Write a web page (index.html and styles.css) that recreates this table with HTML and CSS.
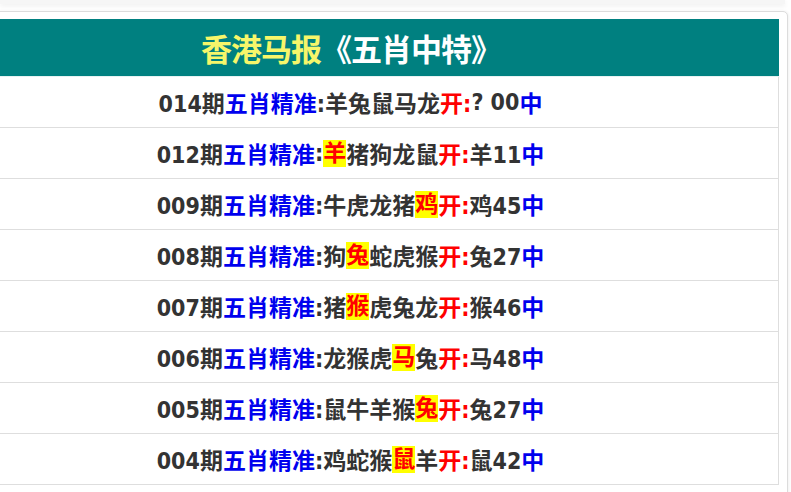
FILE: index.html
```html
<!DOCTYPE html>
<html lang="zh-CN">
<head>
<meta charset="utf-8">
<title>香港马报《五肖中特》</title>
<link rel="stylesheet" href="styles.css">
</head>
<body>
<div class="top"></div>
<div class="card">
  <div class="head"><span class="yl">香港马报</span><span class="wt">《五肖中特》</span></div>
  <div class="list">
    <div class="row">014期<b class="bl">五肖精准</b>:羊兔鼠马龙<b class="rd">开:</b>? 00<b class="bl">中</b></div>
    <div class="row">012期<b class="bl">五肖精准</b>:<span class="hl">羊</span>猪狗龙鼠<b class="rd">开:</b>羊11<b class="bl">中</b></div>
    <div class="row">009期<b class="bl">五肖精准</b>:牛虎龙猪<span class="hl">鸡</span><b class="rd">开:</b>鸡45<b class="bl">中</b></div>
    <div class="row">008期<b class="bl">五肖精准</b>:狗<span class="hl">兔</span>蛇虎猴<b class="rd">开:</b>兔27<b class="bl">中</b></div>
    <div class="row">007期<b class="bl">五肖精准</b>:猪<span class="hl">猴</span>虎兔龙<b class="rd">开:</b>猴46<b class="bl">中</b></div>
    <div class="row">006期<b class="bl">五肖精准</b>:龙猴虎<span class="hl">马</span>兔<b class="rd">开:</b>马48<b class="bl">中</b></div>
    <div class="row">005期<b class="bl">五肖精准</b>:鼠牛羊猴<span class="hl">兔</span><b class="rd">开:</b>兔27<b class="bl">中</b></div>
    <div class="row">004期<b class="bl">五肖精准</b>:鸡蛇猴<span class="hl">鼠</span>羊<b class="rd">开:</b>鼠42<b class="bl">中</b></div>
  </div>
</div>
</body>
</html>
```
FILE: styles.css
```css
html, body {
  margin: 0;
  padding: 0;
  background: #ffffff;
  overflow: hidden;
}
body {
  width: 791px;
  height: 492px;
}
.top {
  height: 4px;
  background: #f6f6f6;
  box-shadow: 0 2px 5px rgba(0, 0, 0, 0.07);
  margin-right: 6px;
}
.card {
  box-sizing: border-box;
  width: 874px;
  margin: 7px 0 0 -86px;
  border: 1px solid #dcdcdc;
  border-radius: 5px;
  padding: 7px 8px 20px 8px;
  background: #fff;
  box-shadow: 1px 0 3px rgba(0, 0, 0, 0.06);
}
.head {
  height: 57px;
  background: #008080;
  border-bottom: 1px solid #e6f2f2;
  display: flex;
  align-items: center;
  justify-content: center;
  font-family: "Noto Sans CJK SC", sans-serif;
  font-weight: 700;
  font-size: 31px;
  letter-spacing: -1px;
}
.yl { color: #f6f66a; }
.wt { color: #ffffff; }
.list {
  border-right: 1px solid #dedede;
}
.row {
  height: 50px;
  border-bottom: 1px solid #dedede;
  display: flex;
  align-items: center;
  justify-content: center;
  font-family: "DejaVu Sans", "Noto Sans CJK SC", sans-serif;
  font-stretch: condensed;
  font-weight: 700;
  font-size: 23px;
  color: #333333;
  white-space: pre;
}
.row b { font-weight: 700; }
.bl { color: #0000ee; }
.rd { color: #ff0000; }
.hl {
  display: inline-block;
  line-height: 27px;
  background: #ffff00;
  color: #ff0000;
}
```
